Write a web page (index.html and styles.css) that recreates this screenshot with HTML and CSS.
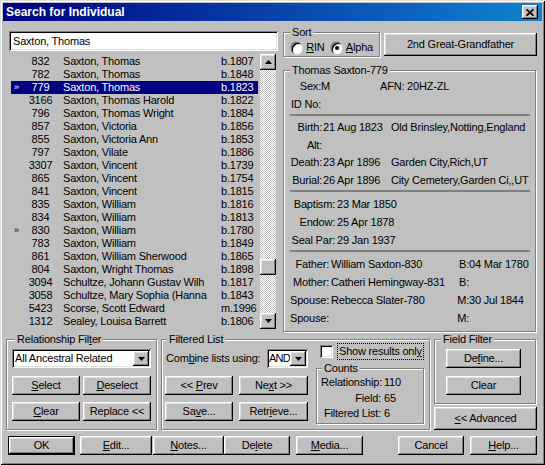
FILE: index.html
```html
<!DOCTYPE html>
<html lang="en">
<head>
  <meta charset="UTF-8">
  <title>Search for Individual</title>
  <link rel="stylesheet" href="styles.css">
</head>
<body>

<div class="window">
  <div class="titlebar">
    <span>Search for Individual</span>
    <button class="close-btn"><svg width="8" height="7" viewBox="0 0 8 7"><path d="M0.5 0.3L7.5 6.7M7.5 0.3L0.5 6.7" stroke="#000" stroke-width="1.7"/></svg></button>
  </div>

  <div class="content">
    <div class="top">
      <div class="left-col">
        <div class="field search">Saxton, Thomas</div>
        <div class="listbox">
          <div class="rows">
            <div class="row"><span class="mark"></span><span class="rin">832</span><span class="name">Saxton, Thomas</span><span>b.1807</span></div>
            <div class="row"><span class="mark"></span><span class="rin">782</span><span class="name">Saxton, Thomas</span><span>b.1848</span></div>
            <div class="row sel"><span class="mark">»</span><span class="rin">779</span><span class="name">Saxton, Thomas</span><span>b.1823</span></div>
            <div class="row"><span class="mark"></span><span class="rin">3166</span><span class="name">Saxton, Thomas Harold</span><span>b.1822</span></div>
            <div class="row"><span class="mark"></span><span class="rin">796</span><span class="name">Saxton, Thomas Wright</span><span>b.1884</span></div>
            <div class="row"><span class="mark"></span><span class="rin">857</span><span class="name">Saxton, Victoria</span><span>b.1856</span></div>
            <div class="row"><span class="mark"></span><span class="rin">855</span><span class="name">Saxton, Victoria Ann</span><span>b.1853</span></div>
            <div class="row"><span class="mark"></span><span class="rin">797</span><span class="name">Saxton, Vilate</span><span>b.1886</span></div>
            <div class="row"><span class="mark"></span><span class="rin">3307</span><span class="name">Saxton, Vincent</span><span>b.1739</span></div>
            <div class="row"><span class="mark"></span><span class="rin">865</span><span class="name">Saxton, Vincent</span><span>b.1754</span></div>
            <div class="row"><span class="mark"></span><span class="rin">841</span><span class="name">Saxton, Vincent</span><span>b.1815</span></div>
            <div class="row"><span class="mark"></span><span class="rin">835</span><span class="name">Saxton, William</span><span>b.1816</span></div>
            <div class="row"><span class="mark"></span><span class="rin">834</span><span class="name">Saxton, William</span><span>b.1813</span></div>
            <div class="row"><span class="mark">»</span><span class="rin">830</span><span class="name">Saxton, William</span><span>b.1780</span></div>
            <div class="row"><span class="mark"></span><span class="rin">783</span><span class="name">Saxton, William</span><span>b.1849</span></div>
            <div class="row"><span class="mark"></span><span class="rin">861</span><span class="name">Saxton, William Sherwood</span><span>b.1865</span></div>
            <div class="row"><span class="mark"></span><span class="rin">804</span><span class="name">Saxton, Wright Thomas</span><span>b.1898</span></div>
            <div class="row"><span class="mark"></span><span class="rin">3094</span><span class="name">Schultze, Johann Gustav Wilh</span><span>b.1817</span></div>
            <div class="row"><span class="mark"></span><span class="rin">3058</span><span class="name">Schultze, Mary Sophia (Hanna</span><span>b.1843</span></div>
            <div class="row"><span class="mark"></span><span class="rin">5423</span><span class="name">Scorse, Scott Edward</span><span>m.1996</span></div>
            <div class="row"><span class="mark"></span><span class="rin">1312</span><span class="name">Sealey, Louisa Barrett</span><span>b.1806</span></div>
          </div>
          <div class="scrollbar">
            <div class="sb-btn"><svg width="7" height="4"><polygon points="3.5,0 7,4 0,4"/></svg></div>
            <div class="sb-track"><div class="sb-thumb"></div></div>
            <div class="sb-btn"><svg width="7" height="4"><polygon points="0,0 7,0 3.5,4"/></svg></div>
          </div>
        </div>
      </div>

      <div class="right-col">
        <div class="sort-row">
          <div class="group sort">
            <div class="legend">Sort</div>
            <div class="radios">
              <span class="radio"></span><span class="radio-label"><u>R</u>IN</span>
              <span class="radio checked"></span><span class="radio-label"><u>A</u>lpha</span>
            </div>
          </div>
          <button class="btn btn-rel">2nd Great-Grandfather</button>
        </div>

        <div class="group person">
          <div class="legend">Thomas Saxton-779</div>
          <div class="sec sec1">
            <span class="lbl">Sex:</span><span>M</span><span>AFN: 20HZ-ZL</span>
            <span class="lbl">ID No:</span><span></span><span></span>
          </div>
          <div class="sep"></div>
          <div class="sec sec2">
            <span class="lbl">Birth:</span><span>21 Aug 1823</span><span>Old Brinsley,Notting,England</span>
            <span class="lbl">Alt:</span><span></span><span></span>
            <span class="lbl">Death:</span><span>23 Apr 1896</span><span>Garden City,Rich,UT</span>
            <span class="lbl">Burial:</span><span>26 Apr 1896</span><span>City Cemetery,Garden Ci,,UT</span>
          </div>
          <div class="sep"></div>
          <div class="sec sec3">
            <span class="lbl">Baptism:</span><span>23 Mar 1850</span>
            <span class="lbl">Endow:</span><span>25 Apr 1878</span>
            <span class="lbl">Seal Par:</span><span>29 Jan 1937</span>
          </div>
          <div class="sep"></div>
          <div class="sec sec4">
            <span class="lbl">Father:</span><span>William Saxton-830</span><span class="lbl2">B:</span><span>04 Mar 1780</span>
            <span class="lbl">Mother:</span><span>Catheri Hemingway-831</span><span class="lbl2">B:</span><span></span>
            <span class="lbl">Spouse:</span><span>Rebecca Slater-780</span><span class="lbl2">M:</span><span>30 Jul 1844</span>
            <span class="lbl">Spouse:</span><span></span><span class="lbl2">M:</span><span></span>
          </div>
        </div>
      </div>
    </div>

    <div class="filters">
      <div class="group rel">
        <div class="legend">Relationship Fil<u>t</u>er</div>
        <div class="field combo">
          <span class="combo-text">All Ancestral Related</span>
          <span class="drop-btn"><svg width="7" height="4"><polygon points="0,0 7,0 3.5,4"/></svg></span>
        </div>
        <div class="btn-grid">
          <button class="btn"><u>S</u>elect</button>
          <button class="btn"><u>D</u>eselect</button>
          <button class="btn"><u>C</u>lear</button>
          <button class="btn">Replace &lt;&lt;</button>
        </div>
      </div>

      <div class="group filtered">
        <div class="legend">Filtered List</div>
        <div class="filtered-body">
          <div class="filtered-left">
            <div class="combine">
              <span>Com<u>b</u>ine lists using:</span>
              <div class="field combo and-combo">
                <span class="combo-text">AND</span>
                <span class="drop-btn"><svg width="7" height="4"><polygon points="0,0 7,0 3.5,4"/></svg></span>
              </div>
            </div>
            <div class="btn-grid">
              <button class="btn">&lt;&lt; <u>P</u>rev</button>
              <button class="btn">Ne<u>x</u>t &gt;&gt;</button>
              <button class="btn">Sa<u>v</u>e...</button>
              <button class="btn">Retr<u>i</u>eve...</button>
            </div>
          </div>
          <div class="filtered-right">
            <div class="check-row">
              <span class="field check"></span>
              <span class="focus">Show results onl<u>y</u></span>
            </div>
            <div class="group counts">
              <div class="legend">Counts</div>
              <div class="count-grid">
                <span class="lbl">Relationship:</span><span>110</span>
                <span class="lbl">Field:</span><span>65</span>
                <span class="lbl">Filtered List:</span><span>6</span>
              </div>
            </div>
          </div>
        </div>
      </div>

      <div class="field-col">
        <div class="group fieldf">
          <div class="legend">Field Filter</div>
          <button class="btn">De<u>f</u>ine...</button>
          <button class="btn">Clear</button>
        </div>
        <button class="btn btn-adv"><u>&lt;</u>&lt; Advanced</button>
      </div>
    </div>

    <div class="actions">
      <button class="btn default b-ok">OK</button>
      <button class="btn b-edit"><u>E</u>dit...</button>
      <button class="btn b-notes"><u>N</u>otes...</button>
      <button class="btn b-delete">De<u>l</u>ete</button>
      <button class="btn b-media"><u>M</u>edia...</button>
      <button class="btn b-cancel">Cancel</button>
      <button class="btn b-help"><u>H</u>elp...</button>
    </div>
  </div>
</div>

</body>
</html>
```

FILE: styles.css
```css
* {
  box-sizing: border-box;
}
body {
  margin: 0;
  font-family: "Liberation Sans", Arial, sans-serif;
  font-size: 11px;
  line-height: 13px;
  letter-spacing: -0.2px;
  color: #000;
  background: #c0c0c0;
}
.window {
  width: 545px;
  height: 465px;
  padding: 3px;
  background: #c0c0c0;
  box-shadow: inset 1px 1px #dfdfdf, inset -1px -1px #000, inset 2px 2px #fff, inset -2px -2px #808080;
}
.titlebar {
  height: 18px;
  display: flex;
  align-items: center;
  justify-content: space-between;
  padding: 0 4px 0 3px;
  background: linear-gradient(to right, #000080, #1084d0);
  color: #fff;
  font-weight: bold;
  font-size: 12px;
  letter-spacing: 0;
}
button {
  font: inherit;
  letter-spacing: inherit;
  color: #000;
  border: 0;
  padding: 0;
  margin: 0;
}
.btn,
.close-btn,
.sb-btn,
.sb-thumb,
.drop-btn {
  background: #c0c0c0;
  box-shadow: inset -1px -1px #000, inset 1px 1px #fff, inset -2px -2px #808080, inset 2px 2px #dfdfdf;
}
.close-btn {
  width: 16px;
  height: 14px;
  display: flex;
  align-items: center;
  justify-content: center;
}
.field {
  background: #fff;
  box-shadow: inset 1px 1px #808080, inset -1px -1px #fff, inset 2px 2px #000, inset -2px -2px #dfdfdf;
}

.content {
  padding: 10px 5px 0 3px;
}
.top {
  display: flex;
  gap: 5px;
  margin-left: 3px;
}
.left-col {
  width: 269px;
}
.search {
  height: 20px;
  line-height: 20px;
  padding-left: 4px;
  margin-bottom: 1px;
}
.listbox {
  height: 279px;
  display: flex;
  padding: 2px;
}
.rows {
  flex: 1;
  padding: 1px 2px 0 0;
  overflow: hidden;
}
.row {
  display: grid;
  grid-template-columns: 13px 33px 164px 1fr;
  height: 13px;
  white-space: nowrap;
}
.row.sel {
  background: #000080;
  color: #fff;
}
.mark {
  font-size: 9px;
  padding-left: 3px;
}
.rin {
  text-align: center;
}
.name {
  padding-left: 6px;
  overflow: hidden;
}
.scrollbar {
  width: 16px;
  display: flex;
  flex-direction: column;
}
.sb-btn {
  height: 16px;
  display: flex;
  align-items: center;
  justify-content: center;
}
.sb-track {
  flex: 1;
  background-image: conic-gradient(#fff 25%, #c0c0c0 0 50%, #fff 0 75%, #c0c0c0 0);
  background-size: 2px 2px;
}
.sb-thumb {
  height: 16px;
  margin-top: 189px;
}

/* group boxes */
.group {
  border: 1px solid #808080;
  box-shadow: inset 1px 1px #fff, 1px 1px #fff;
}
.legend {
  display: table;
  margin-top: -7px;
  padding: 0 2px;
  background: #c0c0c0;
  line-height: 13px;
}

.right-col {
  flex: 1;
}
.sort-row {
  display: flex;
  gap: 4px;
  align-items: flex-start;
}
.sort {
  width: 97px;
  height: 25px;
  margin-top: 1px;
  padding-left: 7px;
}
.sort .legend {
  margin-left: -1px;
}
.radios {
  display: flex;
  align-items: center;
  height: 13px;
  margin-top: 2px;
}
.radio {
  position: relative;
  width: 12px;
  height: 12px;
  border-radius: 50%;
  background: #fff;
  box-shadow: inset 1px 1px #808080, inset 2px 2px #000, -0.5px -0.5px #808080, 0.5px 0.5px #fff;
}
.radio.checked::after {
  content: "";
  position: absolute;
  left: 4px;
  top: 4px;
  width: 4px;
  height: 4px;
  border-radius: 50%;
  background: #000;
}
.radio-label {
  margin: 0 6px 0 4px;
}
.btn-rel {
  flex: 1;
  height: 23px;
  margin-top: 2px;
}
.person {
  height: 262px;
  margin: 13px 1px 0 0;
  padding: 0 5px 0 6px;
}
.sec {
  display: grid;
  grid-auto-rows: 18px;
  align-items: center;
  white-space: nowrap;
}
.lbl {
  text-align: right;
}
.lbl2 {
  text-align: right;
}
.sec1 {
  grid-template-columns: 31px 59px auto;
}
.sec2 {
  grid-template-columns: 33px 68px auto;
  grid-auto-rows: 17.5px;
}
.sec2 .lbl {
  padding-right: 1px;
}
.sec3 {
  grid-template-columns: 47px auto;
}
.sec3 .lbl {
  padding-right: 2px;
}
.sec4 {
  grid-template-columns: 41px 120px 18px auto;
}
.sec4 .lbl {
  padding-right: 2px;
}
.sep {
  height: 2px;
  background: #808080;
  margin: 1px 0 3px;
}

/* filters */
.filters {
  display: flex;
  gap: 4px;
  height: 91px;
  margin-top: 7px;
}
.rel {
  width: 151px;
  padding: 0 5px;
}
.rel .legend {
  margin-left: 3px;
}
.combo {
  height: 19px;
  display: flex;
  padding: 2px;
  margin-top: 3px;
}
.combo-text {
  flex: 1;
  line-height: 15px;
  padding-left: 1px;
  overflow: hidden;
  white-space: nowrap;
}
.drop-btn {
  width: 16px;
  height: 15px;
  display: flex;
  align-items: center;
  justify-content: center;
}
.btn-grid {
  display: grid;
  grid-template-columns: 68px 68px;
  column-gap: 3px;
  row-gap: 7px;
  margin-top: 8px;
}
.btn-grid .btn {
  height: 19px;
}
.filtered {
  width: 269px;
  padding-left: 3px;
}
.filtered .legend {
  margin-left: 2px;
}
.filtered-body {
  display: flex;
}
.filtered-left {
  width: 143px;
  padding-top: 3px;
}
.combine {
  display: flex;
  justify-content: space-between;
  align-items: center;
  height: 19px;
  padding-left: 1px;
}
.and-combo {
  width: 41px;
  margin-top: 0;
}
.and-combo .combo-text {
  padding-left: 0;
  letter-spacing: -0.8px;
}
.filtered .btn-grid {
  grid-template-columns: 68px 69px;
  column-gap: 6px;
}
.filtered-right {
  width: 108px;
  margin: -3px 0 0 8px;
}
.check-row {
  display: flex;
  align-items: center;
  gap: 4px;
  height: 17px;
  padding-left: 4px;
}
.check {
  width: 13px;
  height: 13px;
}
.focus {
  height: 17px;
  line-height: 15px;
  padding: 0 1px;
  border: 1px dotted #000;
  white-space: nowrap;
}
.counts {
  height: 56px;
  margin-top: 8px;
  padding-left: 4px;
}
.counts .legend {
  margin-left: 1px;
}
.count-grid {
  display: grid;
  grid-template-columns: 60px auto;
  column-gap: 3px;
  grid-auto-rows: 15.5px;
  align-items: center;
}
.field-col {
  width: 103px;
}
.fieldf {
  width: 102px;
  height: 65px;
}
.fieldf .legend {
  margin-left: 6px;
}
.fieldf .btn {
  display: block;
  width: 75px;
  height: 19px;
  margin: 8px 0 0 11px;
}
.fieldf .legend + .btn {
  margin-top: 3px;
}
.btn-adv {
  width: 103px;
  height: 23px;
  margin-top: 3px;
}

/* bottom buttons */
.actions {
  display: flex;
  margin-top: 6px;
}
.actions .btn {
  height: 19px;
}
.btn.default {
  border: 1px solid #000;
}
.b-ok { width: 67px; margin-left: 2px; }
.b-edit { width: 72px; margin-left: 5px; }
.b-notes { width: 71px; margin-left: 1px; }
.b-delete { width: 66px; }
.b-media { width: 67px; margin-left: 6px; }
.b-cancel { width: 66px; margin-left: auto; }
.b-help { width: 67px; margin-left: 6px; }
```
